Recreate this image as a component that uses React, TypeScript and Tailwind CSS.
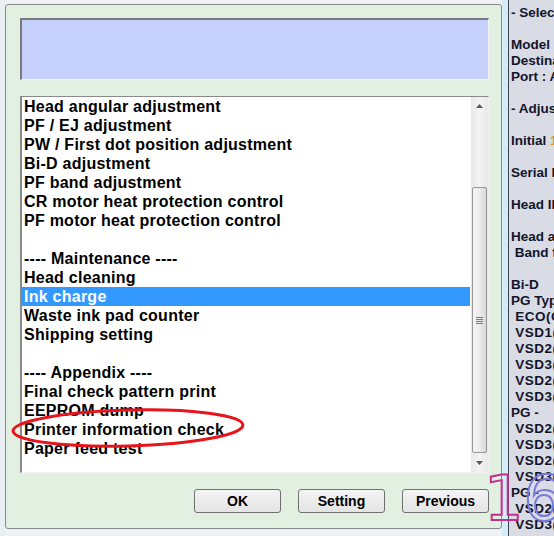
import React from "react"

const items = [
  "Head angular adjustment",
  "PF / EJ adjustment",
  "PW / First dot position adjustment",
  "Bi-D adjustment",
  "PF band adjustment",
  "CR motor heat protection control",
  "PF motor heat protection control",
  "",
  "---- Maintenance ----",
  "Head cleaning",
  "Ink charge",
  "Waste ink pad counter",
  "Shipping setting",
  "",
  "---- Appendix ----",
  "Final check pattern print",
  "EEPROM dump",
  "Printer information check",
  "Paper feed test",
]

const sideLines = [
  "- Select device",
  "",
  "Model : L120",
  "Destination : ECC",
  "Port : Auto selection",
  "",
  "- Adjustment order",
  "",
  "Initial",
  "",
  "Serial No.",
  "",
  "Head ID",
  "",
  "Head angular",
  " Band feed",
  "",
  "Bi-D",
  "PG Type",
  " ECO(Cut)",
  " VSD1(",
  " VSD2(",
  " VSD3(",
  " VSD2(",
  " VSD3(",
  "PG -",
  " VSD2(",
  " VSD3(",
  " VSD2(",
  " VSD3(",
  "PG -",
  " VSD2(",
  " VSD3(",
]

const Button = ({ label }: { label: string }) => (
  <button className="w-[87px] h-[24px] rounded-[3px] border border-[#707070] bg-gradient-to-b from-[#f4f4f4] to-[#e4e4e4] text-[14px] font-bold text-black leading-none">
    {label}
  </button>
)

export default function App() {
  return (
    <div className="relative w-[554px] h-[536px] overflow-hidden bg-[#eef2f6] font-['Liberation_Sans',Arial,sans-serif] flex">
      {/* blurred background left */}
      <div className="w-[5px] shrink-0 bg-[#eaeff4]" />

      {/* Dialog */}
      <div className="w-[497px] shrink-0 mt-[4px] h-[525px] border border-[#8a8a8a] rounded-[3px] bg-[#e1f0e1] pl-[14px] pr-[12px] pt-[13px] flex flex-col">
        <div className="h-[62px] bg-[#c6d0fc] border-t-2 border-l-2 border-t-[#7a7a7a] border-l-[#7a7a7a] border-b border-r border-b-[#f4f4f4] border-r-[#f4f4f4]" />

        {/* List box */}
        <div className="mt-[16px] h-[377px] flex bg-white border-t border-l-2 border-t-[#8a8a8a] border-l-[#8a8a8a] border-b border-r border-b-[#f0f0f0] border-r-[#f0f0f0]">
          <div className="flex-1 pr-[1px]">
            {items.map((it, i) => (
              <div
                key={i}
                className={`h-[19px] leading-[19px] px-[2px] text-[16px] tracking-[0.25px] font-bold whitespace-nowrap ${it === "Ink charge" ? "bg-[#3399ff] text-white" : "text-black"}`}
              >
                {it}
              </div>
            ))}
          </div>

          {/* Scrollbar */}
          <div className="w-[17px] flex flex-col bg-gradient-to-r from-[#e8e8e8] via-[#f4f4f4] to-[#e8e8e8]">
            <div className="h-[17px] flex items-center justify-center">
              <svg width="7" height="4" viewBox="0 0 7 4">
                <path d="M0 4 L3.5 0 L7 4 Z" fill="#5a5a5a" />
              </svg>
            </div>
            <div className="h-[73px]" />
            <div className="h-[266px] mx-[1px] rounded-[2px] border border-[#979797] bg-gradient-to-r from-[#f4f4f4] via-[#ececec] to-[#d8d8d8] flex items-center justify-center">
              <div className="flex flex-col gap-[1px]">
                <div className="w-[7px] h-[1px] bg-[#7c7c7c]" />
                <div className="w-[7px] h-[1px] bg-[#7c7c7c]" />
                <div className="w-[7px] h-[1px] bg-[#7c7c7c]" />
                <div className="w-[7px] h-[1px] bg-[#7c7c7c]" />
              </div>
            </div>
            <div className="flex-1 flex items-center justify-center">
              <svg width="7" height="4" viewBox="0 0 7 4">
                <path d="M0 0 L3.5 4 L7 0 Z" fill="#5a5a5a" />
              </svg>
            </div>
          </div>
        </div>

        <div className="mt-[16px] flex justify-end gap-[17px]">
          <Button label="OK" />
          <Button label="Setting" />
          <Button label="Previous" />
        </div>
      </div>

      {/* gap strip */}
      <div className="w-[6px] shrink-0 bg-[#d3ecf6]" />
      <div className="w-[1px] shrink-0 bg-[#3c4450]" />

      {/* Right panel */}
      <div className="flex-1 bg-[#d9dce4] pt-[5px] pl-[2px] overflow-hidden">
        {sideLines.map((l, i) => (
          <div key={i} className="h-[16px] leading-[16px] text-[13.5px] font-bold text-[#12142a] whitespace-pre">
            {l.startsWith(" VSD") || l.startsWith(" ECO") ? (
              <span className="tracking-[0.5px]">{l}</span>
            ) : l === "Initial" ? (
              <>
                Initial <span className="text-[#e8902a]">1</span>
              </>
            ) : (
              l
            )}
          </div>
        ))}
      </div>

      {/* Red annotation ellipse */}
      <svg className="absolute left-0 top-0 pointer-events-none" width="554" height="536">
        <ellipse cx="128" cy="428" rx="115" ry="18" transform="rotate(-1.5 128 428)" fill="none" stroke="#e8141c" strokeWidth="3" />
      </svg>

      {/* 16 watermark */}
      <div className="absolute left-[484px] top-[468px] flex items-start leading-none font-['DejaVu_Sans',sans-serif] text-[62px] text-transparent pointer-events-none">
        <span className="[-webkit-text-stroke:2px_#c4308e]">1</span>
        <span className="[-webkit-text-stroke:2px_#7a78d8]">6</span>
      </div>
    </div>
  )
}
